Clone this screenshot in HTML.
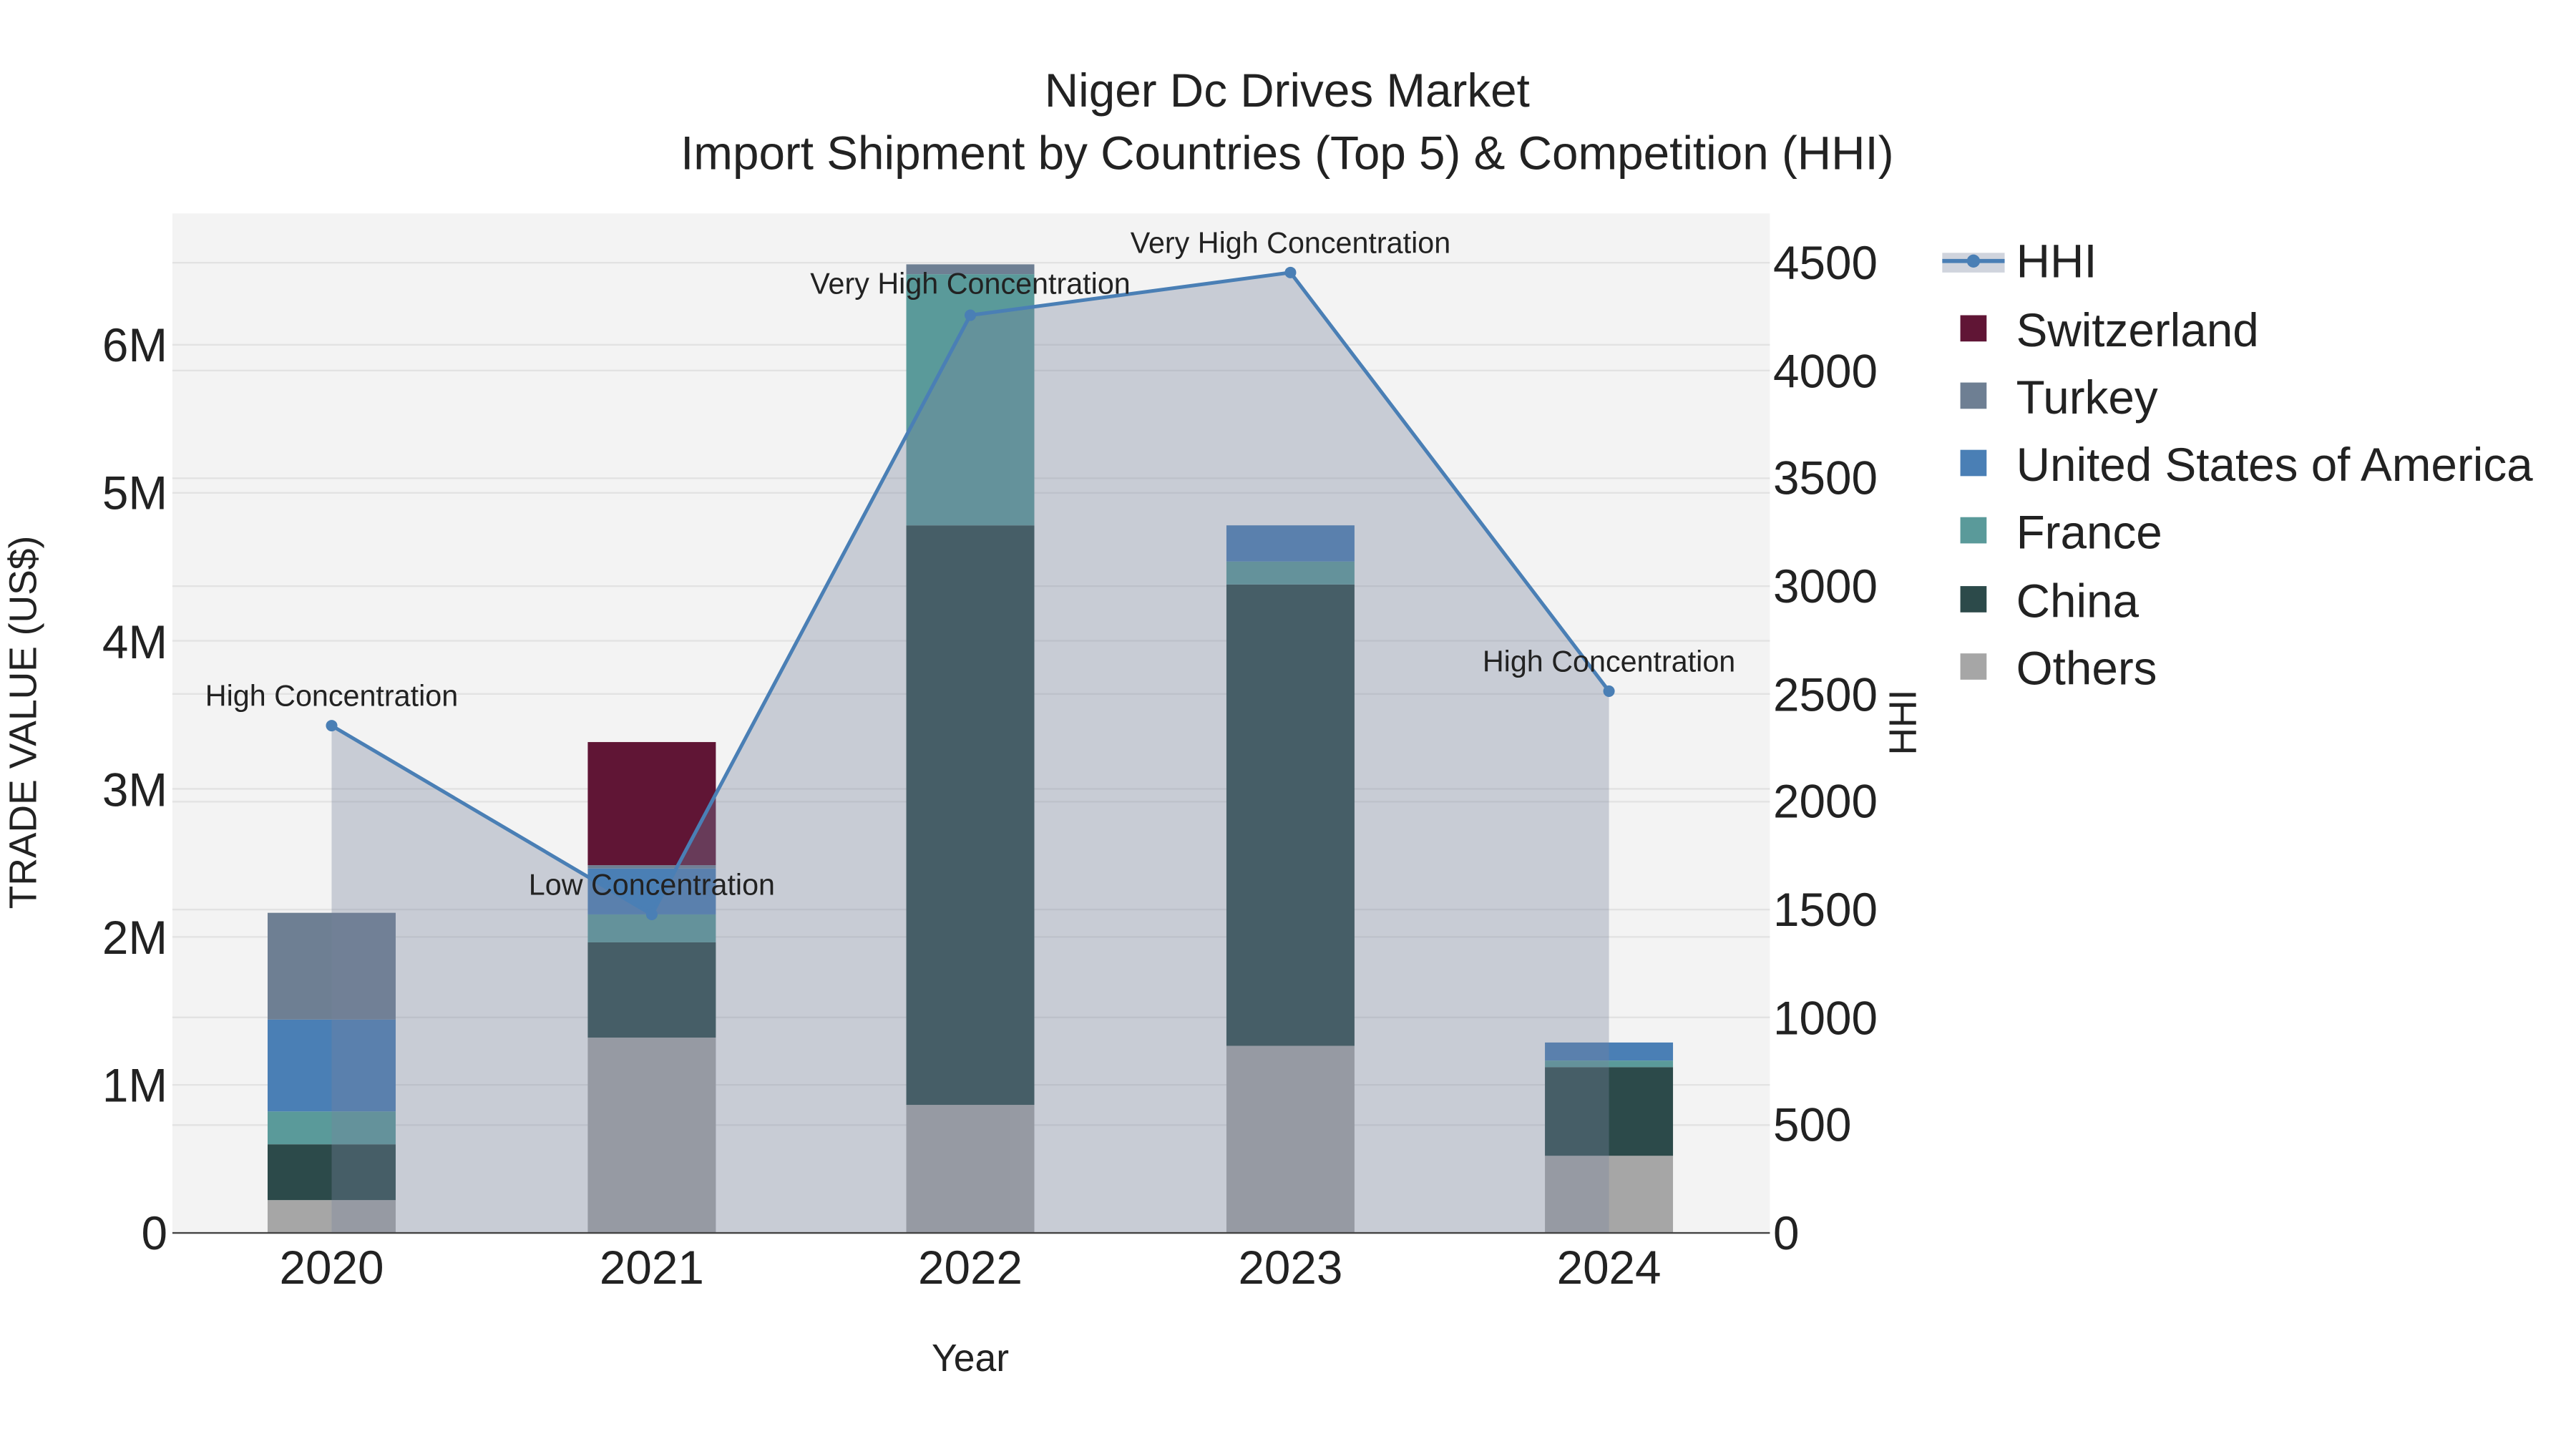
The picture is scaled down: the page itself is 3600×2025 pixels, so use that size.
<!DOCTYPE html>
<html><head><meta charset="utf-8"><style>
html,body{margin:0;padding:0;background:#fff;}
svg{display:block;}
text{font-family:"Liberation Sans",sans-serif;fill:#222;}
</style></head><body>
<svg width="3600" height="2025" viewBox="0 0 1569 882.6" preserveAspectRatio="none" xmlns="http://www.w3.org/2000/svg">
<rect x="0" y="0" width="1600" height="900" fill="#fff"/>
<rect x="105" y="130" width="973" height="621" fill="#f3f3f3"/>
<g stroke="#e2e2e2" stroke-width="1">
<line x1="105" x2="1078" y1="660.8" y2="660.8"/><line x1="105" x2="1078" y1="570.7" y2="570.7"/>
<line x1="105" x2="1078" y1="480.5" y2="480.5"/><line x1="105" x2="1078" y1="390.3" y2="390.3"/>
<line x1="105" x2="1078" y1="300.2" y2="300.2"/><line x1="105" x2="1078" y1="210" y2="210"/>
<line x1="105" x2="1078" y1="685.3" y2="685.3"/><line x1="105" x2="1078" y1="619.7" y2="619.7"/>
<line x1="105" x2="1078" y1="554" y2="554"/><line x1="105" x2="1078" y1="488.3" y2="488.3"/>
<line x1="105" x2="1078" y1="422.7" y2="422.7"/><line x1="105" x2="1078" y1="357" y2="357"/>
<line x1="105" x2="1078" y1="291.3" y2="291.3"/><line x1="105" x2="1078" y1="225.7" y2="225.7"/>
<line x1="105" x2="1078" y1="160" y2="160"/>
</g>
<g>
<rect x="163" y="731" width="78" height="20" fill="#a6a6a6"/>
<rect x="163" y="697" width="78" height="34" fill="#2c4a4a"/>
<rect x="163" y="677" width="78" height="20" fill="#5a9a9a"/>
<rect x="163" y="621" width="78" height="56" fill="#4a7fb5"/>
<rect x="163" y="556" width="78" height="65" fill="#6e7f93"/>
<rect x="358" y="632" width="78" height="119" fill="#a6a6a6"/>
<rect x="358" y="574" width="78" height="58" fill="#2c4a4a"/>
<rect x="358" y="557" width="78" height="17" fill="#5a9a9a"/>
<rect x="358" y="529" width="78" height="28" fill="#4a7fb5"/>
<rect x="358" y="527" width="78" height="2" fill="#6e7f93"/>
<rect x="358" y="452" width="78" height="75" fill="#601535"/>
<rect x="552" y="673" width="78" height="78" fill="#a6a6a6"/>
<rect x="552" y="320" width="78" height="353" fill="#2c4a4a"/>
<rect x="552" y="167" width="78" height="153" fill="#5a9a9a"/>
<rect x="552" y="161" width="78" height="6" fill="#6e7f93"/>
<rect x="747" y="637" width="78" height="114" fill="#a6a6a6"/>
<rect x="747" y="356" width="78" height="281" fill="#2c4a4a"/>
<rect x="747" y="342" width="78" height="14" fill="#5a9a9a"/>
<rect x="747" y="320" width="78" height="22" fill="#4a7fb5"/>
<rect x="941" y="704" width="78" height="47" fill="#a6a6a6"/>
<rect x="941" y="650" width="78" height="54" fill="#2c4a4a"/>
<rect x="941" y="646" width="78" height="4" fill="#5a9a9a"/>
<rect x="941" y="635" width="78" height="11" fill="#4a7fb5"/>
</g>
<polygon points="202,751 202,442 397,557 591,192 786,166 980,421 980,751" fill="rgb(119,131,158)" fill-opacity="0.35"/>
<polyline points="202,442 397,557 591,192 786,166 980,421" fill="none" stroke="#4a7fb5" stroke-width="2.2"/>
<g fill="#4a7fb5"><circle cx="202" cy="442" r="3.5"/><circle cx="397" cy="557" r="3.5"/><circle cx="591" cy="192" r="3.5"/><circle cx="786" cy="166" r="3.5"/><circle cx="980" cy="421" r="3.5"/></g>
<line x1="105" x2="1078" y1="751" y2="751" stroke="#444" stroke-width="1"/>
<g font-size="18" text-anchor="middle">
<text x="202" y="430">High Concentration</text>
<text x="397" y="545">Low Concentration</text>
<text x="591" y="179">Very High Concentration</text>
<text x="786" y="154">Very High Concentration</text>
<text x="980" y="409">High Concentration</text>
</g>
<g font-size="28.6" text-anchor="end">
<text x="102" y="761">0</text><text x="102" y="671">1M</text><text x="102" y="581">2M</text>
<text x="102" y="491">3M</text><text x="102" y="401">4M</text><text x="102" y="310">5M</text><text x="102" y="220">6M</text>
</g>
<g font-size="28.6" text-anchor="start">
<text x="1080" y="761">0</text><text x="1080" y="695">500</text><text x="1080" y="630">1000</text>
<text x="1080" y="564">1500</text><text x="1080" y="498">2000</text><text x="1080" y="433">2500</text>
<text x="1080" y="367">3000</text><text x="1080" y="301">3500</text><text x="1080" y="236">4000</text><text x="1080" y="170">4500</text>
</g>
<g font-size="28.6" text-anchor="middle">
<text x="202" y="782">2020</text><text x="397" y="782">2021</text><text x="591" y="782">2022</text>
<text x="786" y="782">2023</text><text x="980" y="782">2024</text>
</g>
<text x="591" y="835" font-size="23.3" text-anchor="middle">Year</text>
<text transform="translate(22,440) rotate(-90)" font-size="23.3" text-anchor="middle">TRADE VALUE (US$)</text>
<text transform="translate(1167,440) rotate(-90)" font-size="23.3" text-anchor="middle">HHI</text>
<text x="784" y="65" font-size="28.6" text-anchor="middle">Niger Dc Drives Market</text>
<text x="784" y="103" font-size="28.6" text-anchor="middle">Import Shipment by Countries (Top 5) &amp; Competition (HHI)</text>
<rect x="1183" y="154" width="38" height="12" fill="rgb(119,131,158)" fill-opacity="0.35"/>
<line x1="1183" x2="1221" y1="159" y2="159" stroke="#4a7fb5" stroke-width="2.5"/>
<circle cx="1202" cy="159" r="4" fill="#4a7fb5"/>
<rect x="1194" y="192" width="16" height="16" fill="#601535"/>
<rect x="1194" y="233" width="16" height="16" fill="#6e7f93"/>
<rect x="1194" y="274" width="16" height="16" fill="#4a7fb5"/>
<rect x="1194" y="315" width="16" height="16" fill="#5a9a9a"/>
<rect x="1194" y="357" width="16" height="16" fill="#2c4a4a"/>
<rect x="1194" y="398" width="16" height="16" fill="#a6a6a6"/>
<g font-size="28.6">
<text x="1228" y="169">HHI</text><text x="1228" y="211">Switzerland</text><text x="1228" y="252">Turkey</text>
<text x="1228" y="293">United States of America</text><text x="1228" y="334">France</text>
<text x="1228" y="376">China</text><text x="1228" y="417">Others</text>
</g>
</svg>
</body></html>
